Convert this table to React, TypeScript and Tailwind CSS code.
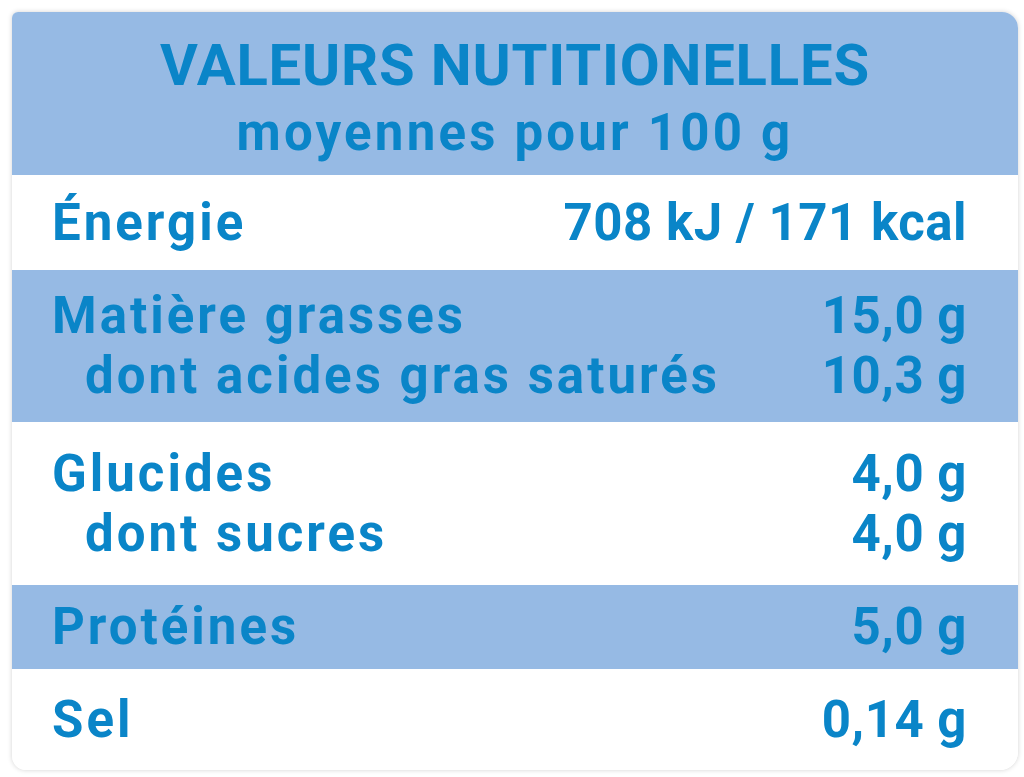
import React from "react";

interface Line {
  label: string;
  value: string;
  indent?: boolean;
}

interface Section {
  lines: Line[];
  shaded: boolean;
  height: string;
}

const sections: Section[] = [
  { shaded: false, height: "h-[95px]", lines: [{ label: "Énergie", value: "708 kJ / 171 kcal" }] },
  {
    shaded: true,
    height: "h-[152px]",
    lines: [
      { label: "Matière grasses", value: "15,0 g" },
      { label: "dont acides gras saturés", value: "10,3 g", indent: true },
    ],
  },
  {
    shaded: false,
    height: "h-[163px]",
    lines: [
      { label: "Glucides", value: "4,0 g" },
      { label: "dont sucres", value: "4,0 g", indent: true },
    ],
  },
  { shaded: true, height: "h-[84px]", lines: [{ label: "Protéines", value: "5,0 g" }] },
  { shaded: false, height: "h-[101px]", lines: [{ label: "Sel", value: "0,14 g" }] },
];

export default function App() {
  return (
    <div className="w-[1024px] h-[777px] bg-white pt-[12px] pl-[12px] pr-[6px] pb-[7px] font-['Roboto',sans-serif] font-bold text-[#0a85c8]">
      <div className="h-full flex flex-col overflow-hidden rounded-tl-[6px] rounded-tr-[16px] rounded-bl-[14px] rounded-br-[18px] bg-white shadow-[0_0_5px_rgba(0,0,0,0.18)]">
        {/* Header */}
        <div className="h-[163px] bg-[#96bae4] flex flex-col items-center pt-[19px]">
          <h1 className="text-[58px] leading-[68px] tracking-[0.8px]">VALEURS NUTITIONELLES</h1>
          <p className="mt-[4px] text-[51px] leading-[60px] tracking-[3.2px]">moyennes pour 100 g</p>
        </div>

        {/* Rows */}
        {sections.map((s, i) => (
          <div
            key={i}
            className={`${s.height} flex flex-col justify-center pl-[40px] pr-[51px] ${
              s.shaded ? "bg-[#96bae4]" : "bg-white"
            }`}
          >
            {s.lines.map((l) => (
              <div key={l.label} className="flex justify-between items-baseline text-[51px] leading-[60px]">
                <span className={`tracking-[3px] ${l.indent ? "pl-[33px]" : ""}`}>{l.label}</span>
                <span className="tracking-[0.5px]">{l.value}</span>
              </div>
            ))}
          </div>
        ))}
      </div>
    </div>
  );
}
